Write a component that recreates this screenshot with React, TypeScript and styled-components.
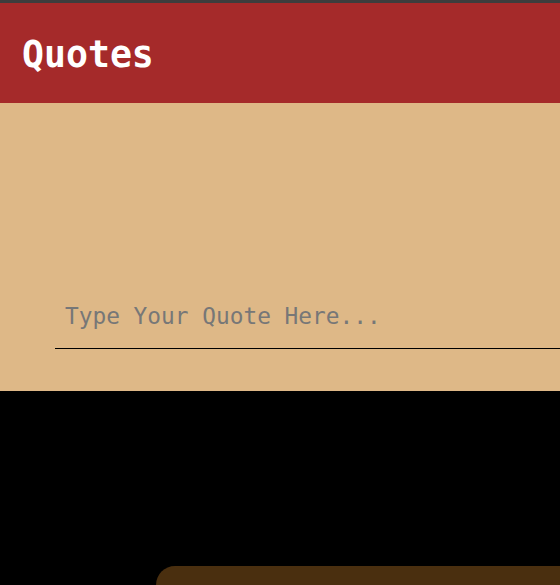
import React from "react";
import styled, { createGlobalStyle } from "styled-components";

const Global = createGlobalStyle`
  html, body { margin: 0; padding: 0; background: #000; overflow: hidden; }
  body { font-family: "DejaVu Sans Mono", monospace; }
`;

const Page = styled.div`
  width: 560px;
  height: 585px;
  border-top: 3px solid #3d3d3d;
  box-sizing: border-box;
  display: flex;
  flex-direction: column;
  background: #000;
`;

const Header = styled.header`
  height: 100px;
  flex: none;
  background: #a52a2a;
  display: flex;
  align-items: center;
  padding: 4px 0 0 22px;
  box-sizing: border-box;
`;

const Title = styled.h1`
  margin: 0;
  color: #fff;
  font-family: "DejaVu Sans Mono", monospace;
  font-weight: bold;
  font-size: 36.5px;
  line-height: 1;
`;

const Composer = styled.section`
  height: 288px;
  flex: none;
  background: #deb887;
  display: flex;
  align-items: flex-end;
  padding: 0 0 42px 55px;
  box-sizing: border-box;
`;

const QuoteInput = styled.input`
  flex: 1;
  min-width: 0;
  background: transparent;
  border: none;
  border-bottom: 1px solid #000;
  outline: none;
  padding: 10px 10px 19px 10px;
  font-family: "DejaVu Sans Mono", monospace;
  font-size: 22.8px;
  color: #333;
  &::placeholder { color: #777; }
`;

const Feed = styled.section`
  flex: 1;
  background: #000;
  display: flex;
  align-items: flex-end;
  padding-left: 156px;
  overflow: hidden;
`;

const Card = styled.div`
  flex: 1;
  height: 19px;
  background: #4a2f0f;
  border-radius: 24px 0 0 0;
`;

export default function App() {
  return (
    <>
      <Global />
      <Page>
        <Header>
          <Title>Quotes</Title>
        </Header>
        <Composer>
          <QuoteInput placeholder="Type Your Quote Here..." />
        </Composer>
        <Feed>
          <Card />
        </Feed>
      </Page>
    </>
  );
}
